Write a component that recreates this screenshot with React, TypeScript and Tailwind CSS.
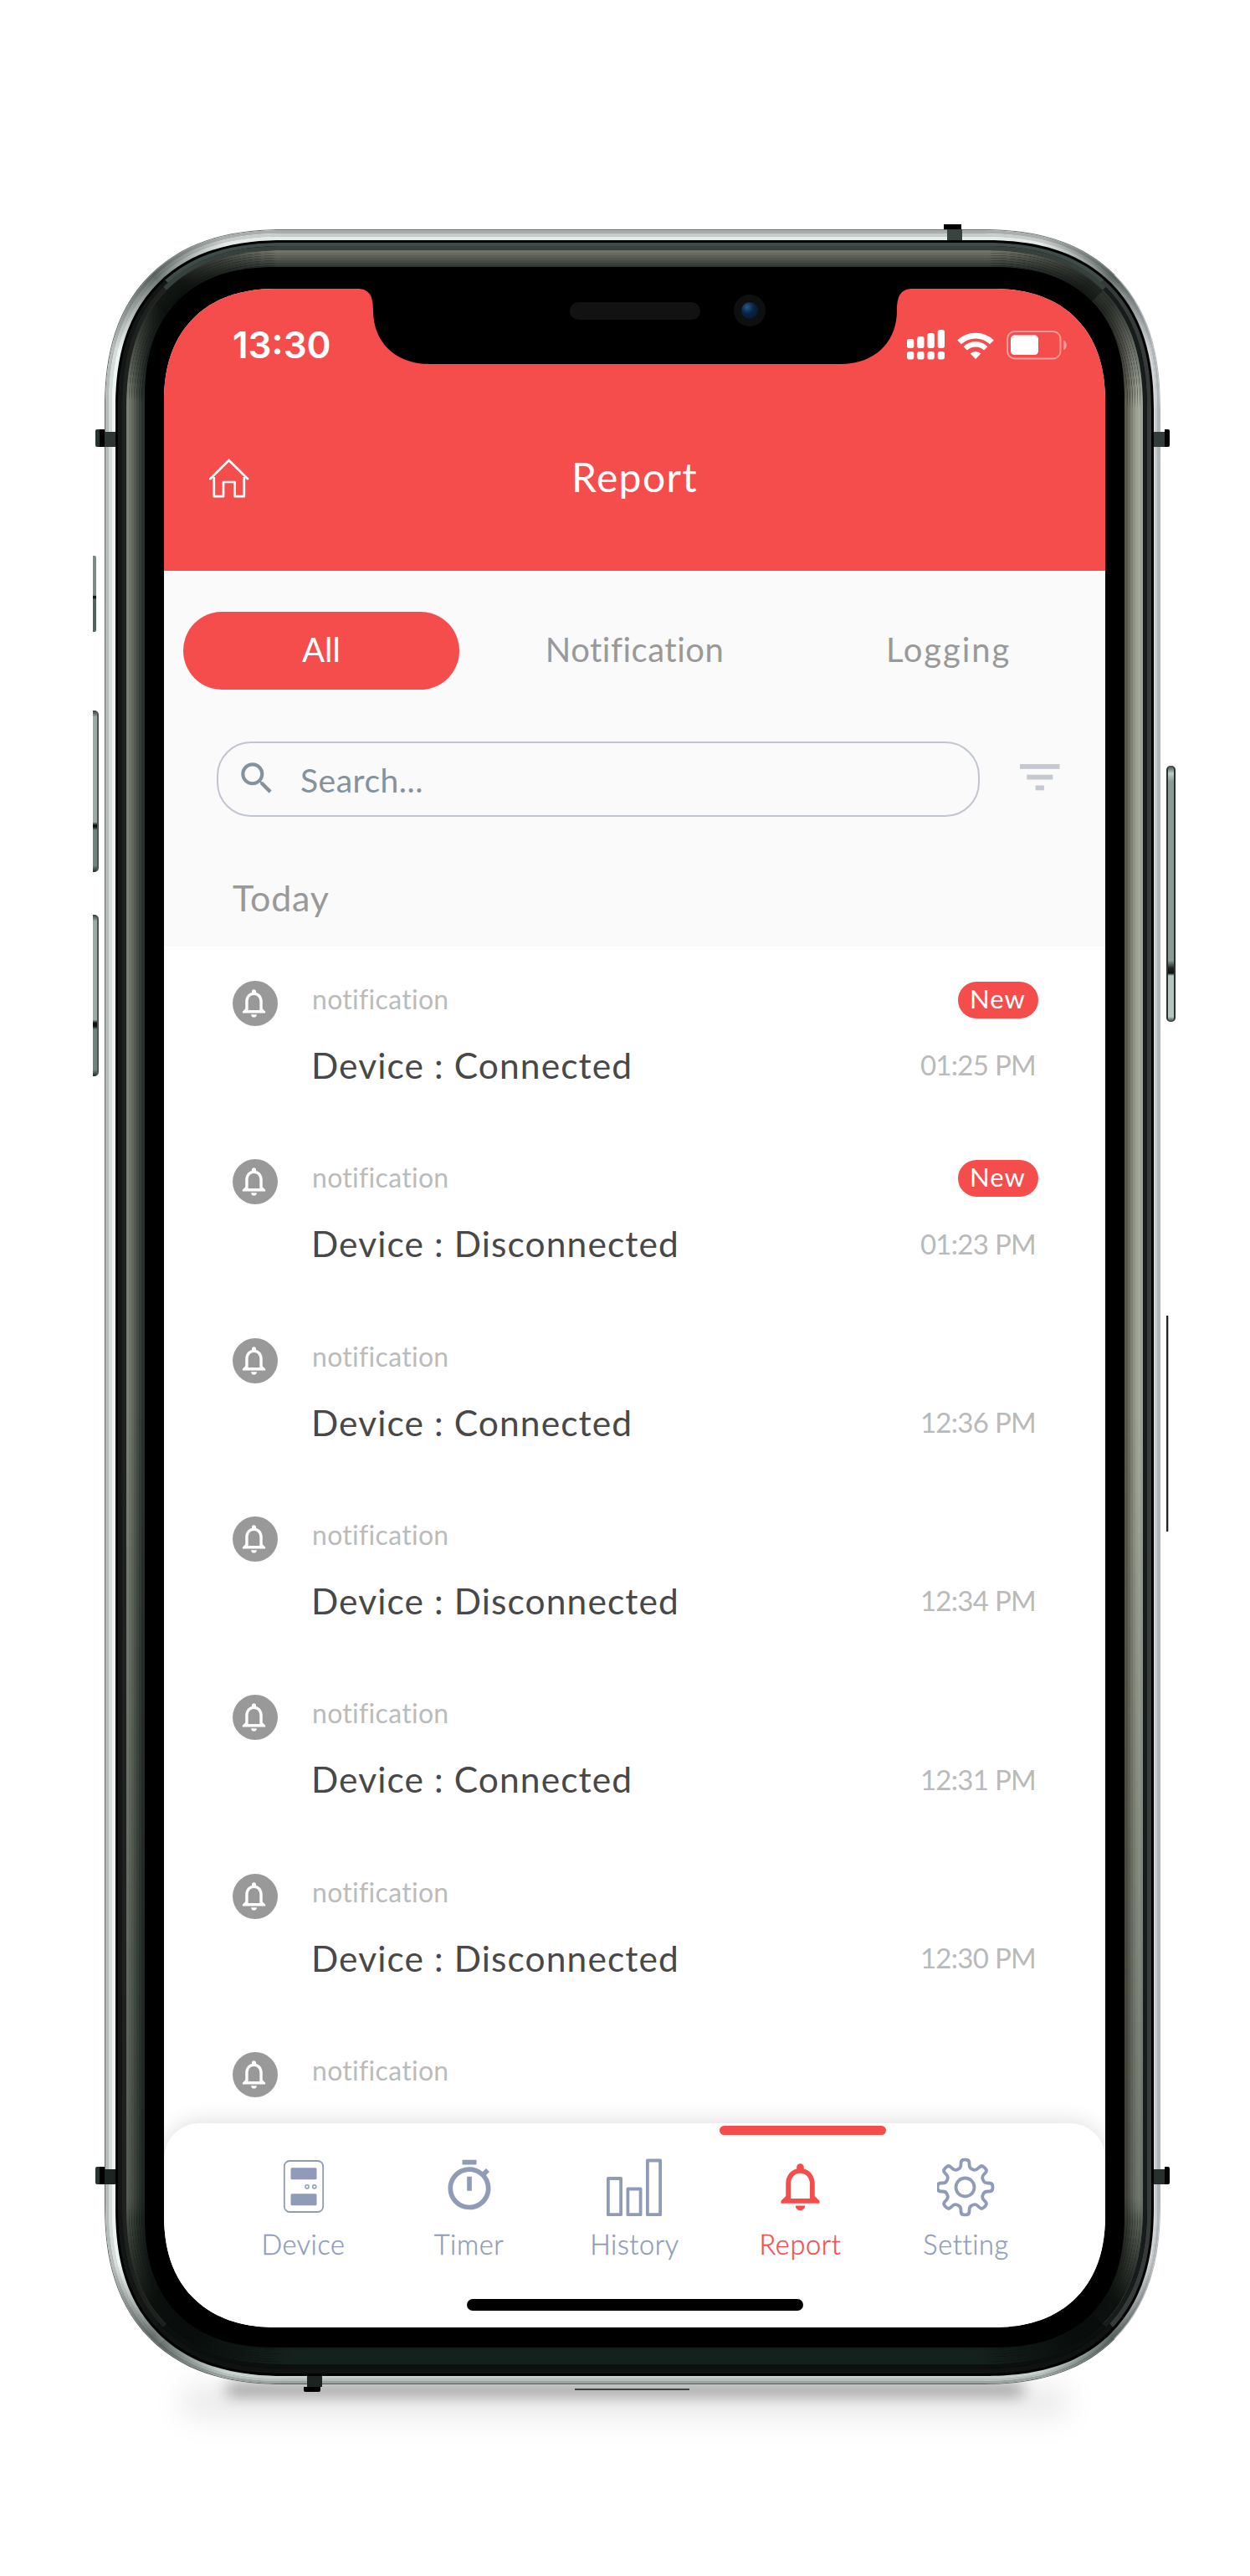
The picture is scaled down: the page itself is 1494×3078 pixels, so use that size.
import type { ReactNode } from "react";
import { MdNotificationsNone, MdOutlineTimer, MdSearch } from "react-icons/md";

// Rings of the metal case, from the outside inwards; every ring is one border.
// `shade` is laid over the rings inside it, up to the next ring with a z-index.
const rings: { ring: string; shade?: string }[] = [
  {
    ring: "relative rounded-[215px] border-[1px] border-l-[#5f6867] border-t-[#6e7574] border-r-[#b4b7b8] border-b-[#555b59]",
    shade:
      "rounded-[214px] bg-[radial-gradient(circle_95px_at_58px_58px,rgba(30,40,37,0.6),transparent),radial-gradient(circle_95px_at_calc(100%_-_58px)_58px,rgba(30,40,37,0.6),transparent),radial-gradient(circle_95px_at_58px_calc(100%_-_58px),rgba(30,40,37,0.6),transparent),radial-gradient(circle_95px_at_calc(100%_-_58px)_calc(100%_-_58px),rgba(30,40,37,0.6),transparent)]",
  },
  { ring: "rounded-[214px] border-l-[4px] border-t-[4px] border-r-[3px] border-b-[3px] border-l-[#b6bcbb] border-t-[#a8aeac] border-r-[#b0b5b8] border-b-[#9aa39f]" },
  { ring: "rounded-[210px] border-l-[4px] border-t-[4px] border-r-[2px] border-b-[3px] border-l-[#d6dcda] border-t-[#c8cdcb] border-r-[#c4c8ca] border-b-[#b5c0bb]" },
  { ring: "rounded-[206px] border-l-[4px] border-t-[4px] border-r-[2px] border-b-[3px] border-l-[#ecf5f2] border-t-[#e2ebe8] border-r-[#d2d4d6] border-b-[#c5d0cb]" },
  { ring: "relative z-10 rounded-[202px] border-[3px] border-black bg-black" },
  { ring: "rounded-[199px] border-l-[5px] border-t-[4px] border-r-[5px] border-b-[6px] border-l-[#121715] border-t-[#3e4b49] border-r-[#363a39] border-b-[#0e1211]" },
  {
    ring: "relative rounded-[194px] border-[5px] border-l-[#1f211f] border-t-[#36403d] border-r-[#151c1b] border-b-[#0b0f0e]",
    shade:
      "rounded-[189px] bg-[radial-gradient(circle_130px_at_56px_56px,rgba(8,12,10,0.9)_15%,transparent),radial-gradient(circle_130px_at_calc(100%_-_56px)_56px,rgba(8,12,10,0.75)_15%,transparent),radial-gradient(circle_150px_at_56px_calc(100%_-_56px),rgba(8,12,10,0.95)_20%,transparent),radial-gradient(circle_150px_at_calc(100%_-_56px)_calc(100%_-_56px),rgba(8,12,10,0.95)_20%,transparent),linear-gradient(transparent_55%,rgba(8,18,14,0.4))]",
  },
  { ring: "rounded-[189px] border-[3px] border-l-[#7a8074] border-t-[#6f7368] border-r-[#9ba295] border-b-[#1c2a25]" },
  { ring: "rounded-[186px] border-[3px] border-l-[#6e7468] border-t-[#666a60] border-r-[#a3a99b] border-b-[#1d2b26]" },
  { ring: "rounded-[183px] border-[3px] border-l-[#60675c] border-t-[#5c6157] border-r-[#9ca193] border-b-[#1e2b27]" },
  { ring: "rounded-[180px] border-[3px] border-l-[#515950] border-t-[#51564e] border-r-[#8f9284] border-b-[#1e2b27]" },
  { ring: "rounded-[177px] border-[3px] border-l-[#424a44] border-t-[#454b44] border-r-[#7f8074] border-b-[#1e2b27]" },
  { ring: "rounded-[174px] border-[3px] border-l-[#353d38] border-t-[#3a403a] border-r-[#6c6b60] border-b-[#1d2b26]" },
  { ring: "rounded-[171px] border-l-[4px] border-t-[2px] border-r-[4px] border-b-[2px] border-l-[#28302d] border-t-[#2f3631] border-r-[#5a594f] border-b-[#1a2622]" },
  { ring: "relative z-10 rounded-[158px] border-l-[23px] border-t-[26px] border-r-[23px] border-b-[24px] border-black bg-black" },
];

function Case({ children }: { children: ReactNode }) {
  return rings.reduceRight<ReactNode>(
    (inner, { ring, shade }) => (
      <div className={`h-full w-full [corner-shape:superellipse(1.25)] ${ring}`}>
        {shade && <div className={`absolute inset-0 [corner-shape:superellipse(1.25)] ${shade}`} />}
        {inner}
      </div>
    ),
    children,
  );
}

function HomeIcon() {
  return (
    <svg width="48" height="48" viewBox="0 0 48 48" fill="none" stroke="#fff" strokeWidth="2.7">
      <path d="M1.3 25.2V24L23.6 2 46 24v1.2" />
      <path d="M5.8 22v23.2h11.2V28h13.6v17.2h11.2V22" strokeLinejoin="round" />
    </svg>
  );
}

function Signal() {
  const bars = [11, 14, 18, 22];
  return (
    <svg width="45" height="36" viewBox="0 0 45 36" fill="#fff">
      {bars.map((h, i) => (
        <g key={h}>
          <rect x={i * 12.25} y={22 - h} width="8.3" height={h} rx="2.8" />
          <rect x={i * 12.25} y="26" width="8.3" height="9.5" rx="2.8" />
        </g>
      ))}
    </svg>
  );
}

function Wifi() {
  return (
    <svg width="44" height="33" viewBox="0 0 44 33" fill="none" stroke="#fff">
      <path d="M2.55 12.9a28 28 0 0 1 38.9 0" strokeWidth="6.8" />
      <path d="M9.8 20.4a17.5 17.5 0 0 1 24.4 0" strokeWidth="6.2" />
      <path d="M22 33l-6.3-6.5a9 9 0 0 1 12.6 0z" fill="#fff" stroke="none" />
    </svg>
  );
}

function Battery() {
  return (
    <svg width="72" height="35" viewBox="0 0 72 35">
      <rect x="1" y="1" width="63.5" height="32.5" rx="9" fill="none" stroke="#fff" strokeOpacity=".45" strokeWidth="2" />
      <rect x="5" y="5.5" width="33" height="23.5" rx="4.5" fill="#fff" />
      <path d="M68 11.5c5 1.8 5 10 0 11.8z" fill="#fff" fillOpacity=".45" />
    </svg>
  );
}

function FilterIcon() {
  return (
    <svg width="48" height="32" viewBox="0 0 48 32" fill="#c4c8d1">
      <rect y="0" width="47.5" height="5.8" />
      <rect x="8.3" y="12.7" width="31" height="5.8" />
      <rect x="18.6" y="25.5" width="10.3" height="5.8" />
    </svg>
  );
}

function DeviceIcon() {
  return (
    <svg width="50" height="70" viewBox="0 0 50 70" fill="none" stroke="#8f9bb7">
      <rect x="1.8" y="4" width="46.4" height="61" rx="6.5" strokeWidth="1.8" />
      <g fill="#8f9bb7" stroke="none">
        <rect x="9.5" y="12.3" width="31" height="14" rx="1.5" />
        <rect x="9.5" y="43.3" width="31" height="14" rx="1.5" />
      </g>
      <circle cx="29" cy="34.8" r="2.1" strokeWidth="1.5" />
      <circle cx="37.7" cy="34.8" r="2.1" strokeWidth="1.5" />
    </svg>
  );
}

function HistoryIcon() {
  return (
    <svg width="68" height="70" viewBox="1 0 68 70" fill="none" stroke="#8f9bb7" strokeWidth="3.8" strokeLinejoin="round">
      <rect x="2.9" y="25" width="15.2" height="43.2" />
      <rect x="26.4" y="37.5" width="15.2" height="30.7" />
      <rect x="49.9" y="3.5" width="15.2" height="64.7" />
    </svg>
  );
}

// Outline of a gear with eight teeth, its corners rounded.
function gearPath() {
  const pts: [number, number][] = [];
  const at = (deg: number, r: number) => {
    const a = ((deg - 90) * Math.PI) / 180;
    pts.push([35 + r * Math.cos(a), 35.5 + r * Math.sin(a)]);
  };
  for (let i = 0; i < 8; i++) {
    at(i * 45 - 12.5, 23.5);
    at(i * 45 - 8.5, 33.3);
    at(i * 45 + 8.5, 33.3);
    at(i * 45 + 12.5, 23.5);
  }
  const n = pts.length;
  const mix = (a: [number, number], b: [number, number], t: number) =>
    `${(a[0] + (b[0] - a[0]) * t).toFixed(2)} ${(a[1] + (b[1] - a[1]) * t).toFixed(2)}`;
  return (
    pts
      .map((p, i) => {
        const prev = pts[(i + n - 1) % n];
        const next = pts[(i + 1) % n];
        return `${i ? "L" : "M"}${mix(p, prev, 0.4)}Q${p[0].toFixed(2)} ${p[1].toFixed(2)} ${mix(p, next, 0.4)}`;
      })
      .join("") + "Z"
  );
}

function GearIcon() {
  return (
    <svg width="70" height="71" viewBox="1.5 0 70 71" fill="none" stroke="#8f9bb7" strokeWidth="3.8" strokeLinejoin="round">
      <path d={gearPath()} />
      <circle cx="35" cy="35.5" r="11" />
    </svg>
  );
}

const rows = [
  { text: "Device : Connected", time: "01:25 PM", isNew: true },
  { text: "Device : Disconnected", time: "01:23 PM", isNew: true },
  { text: "Device : Connected", time: "12:36 PM" },
  { text: "Device : Disconnected", time: "12:34 PM" },
  { text: "Device : Connected", time: "12:31 PM" },
  { text: "Device : Disconnected", time: "12:30 PM" },
  { text: "Device : Connected", time: "" },
];

const tabs = [
  { label: "Device", icon: <DeviceIcon /> },
  { label: "Timer", icon: <MdOutlineTimer size={68} /> },
  { label: "History", icon: <HistoryIcon /> },
  { label: "Report", icon: <MdNotificationsNone size={69} />, active: true },
  { label: "Setting", icon: <GearIcon /> },
];

function Row({ text, time, isNew }: { text: string; time: string; isNew?: boolean }) {
  return (
    <div className="flex h-[213.33px] shrink-0 pt-[41px] pr-[80px] pl-[82px]">
      <div className="flex size-[54px] items-center justify-center rounded-full bg-[#999] pr-[3px] pb-px text-white">
        <MdNotificationsNone size={41} />
      </div>
      <div className="ml-10 flex-1">
        <div className="flex h-[45px] justify-between">
          <span className="ml-px text-[32px] leading-[43px] tracking-[0.3px] text-[#bbb]">notification</span>
          {isNew && (
            <span className="mt-px flex h-11 w-24 items-center justify-center rounded-full bg-[#f54c4c] pr-px pb-1 text-[31px] tracking-[1px] text-white">
              New
            </span>
          )}
        </div>
        <div className="mt-[31px] flex h-[50px] items-center justify-between">
          <span className="text-[42.5px] leading-[50px] tracking-[1.1px] text-[#484848]">{text}</span>
          <span className="mr-[3px] text-[33px] tracking-[-0.7px] text-[#b8babb]">{time}</span>
        </div>
      </div>
    </div>
  );
}

function Screen() {
  return (
    <div className="relative flex h-full w-full flex-col overflow-hidden rounded-[135px] bg-white [corner-shape:superellipse(1.2)]">
      <header className="h-[337px] bg-[#f54c4c] text-white">
        <div className="flex h-[134px] items-center justify-between pr-[46px] pl-[82px]">
          <span className="font-[Inter] text-[44px] font-semibold">13:30</span>
          <div className="flex items-center">
            <Signal />
            <div className="ml-[15px]"><Wifi /></div>
            <div className="ml-[15px]"><Battery /></div>
          </div>
        </div>
        <div className="grid h-[203px] grid-cols-[200px_1fr_200px] items-center pb-[21px]">
          <div className="pt-[3px] pl-[54px]"><HomeIcon /></div>
          <h1 className="text-center text-[48px] tracking-[1.4px]">Report</h1>
        </div>
      </header>

      <section className="h-[449px] bg-[#fafafa] pt-[49px]">
        <div className="grid h-[93px] grid-cols-3 text-center text-[40px] text-[#999]">
          <div className="mr-[22px] ml-[23px] flex items-center justify-center rounded-full bg-[#f54c4c] pb-1 text-white">All</div>
          <div className="flex items-center justify-center pb-1 tracking-[0.5px]">Notification</div>
          <div className="flex items-center justify-center pb-1 tracking-[1.9px]">Logging</div>
        </div>
        <div className="mt-[62px] flex h-[90px] pl-[63px]">
          <div className="flex w-[912px] items-center rounded-[41px] border-[2.5px] border-[#c1c5cf] pl-[21px] text-[#84929e]">
            <MdSearch size={50} className="mb-0.5" />
            <span className="mt-[3px] ml-[27px] text-[39px] tracking-[0.5px]">Search...</span>
          </div>
          <div className="mt-[27px] ml-[48px]"><FilterIcon /></div>
        </div>
        <h2 className="mt-[67px] pl-[82px] text-[43px] leading-[60px] tracking-[0.8px] text-[#999]">Today</h2>
      </section>

      <div className="flex h-[1446px] shrink-0 flex-col overflow-hidden">
        {rows.map((row, i) => (
          <Row key={i} {...row} />
        ))}
      </div>

      <nav className="relative -mt-10 flex h-[244px] shrink-0 justify-center rounded-t-[42px] bg-white pt-[41px] shadow-[0_-3px_24px_rgba(0,0,0,0.12)]">
        {tabs.map((tab) => (
          <div
            key={tab.label}
            className={`relative flex w-[198px] flex-col items-center ${tab.active ? "text-[#f54c4c]" : "text-[#8f9bb7]"}`}
          >
            {tab.active && (
              <div className="absolute -top-[38px] left-[2px] h-[11px] w-[199px] rounded-full bg-[#f54c4c]" />
            )}
            <div className="flex h-[70px] items-start">{tab.icon}</div>
            <span className="mt-[14px] text-[32.5px] leading-10 font-light tracking-[0.6px] [-webkit-text-stroke:0.4px_currentColor]">
              {tab.label}
            </span>
          </div>
        ))}
        <div className="absolute bottom-5 left-1/2 h-[14px] w-[402px] -translate-x-1/2 rounded-full bg-black" />
      </nav>

      <div className="absolute -top-px left-[231px]">
        <svg width="664" height="91" viewBox="0 -1 664 91">
          <path d="M0-1V0C14 0 19 8 19 26 19 65 47 90 86 90H578C617 90 645 65 645 26 645 8 650 0 664 0V-1z" fill="#000" />
        </svg>
        <div className="absolute top-[17px] left-[254px] h-[21px] w-[156px] rounded-full bg-[#121212]" />
        <div className="absolute top-[8px] left-[450px] flex size-[38px] items-center justify-center rounded-full bg-[#0e0f0f]">
          <div className="size-5 rounded-full bg-[radial-gradient(circle_at_35%_30%,#24598d_0%,#0b2443_40%,#061222_100%)]" />
        </div>
      </div>
    </div>
  );
}

function Buttons() {
  return (
    <>
      <div className="absolute top-[664px] left-[111px] h-[91px] w-1 rounded-r-xs bg-[linear-gradient(#7d8a85_0_52%,#10181a_53%_56%,#4f6660_57%)]" />
      <div className="absolute top-[849px] left-[111px] h-[193px] w-[7px] rounded-r-[5px] border-r-2 border-[#4c5653] bg-[linear-gradient(#333b39_0%,#9aaaa4_4%_69%,#0c1211_71%_72%,#6c857d_74%_96%,#1e2826_100%)]" />
      <div className="absolute top-[1093px] left-[111px] h-[193px] w-[7px] rounded-r-[5px] border-r-2 border-[#4c5653] bg-[linear-gradient(#333b39_0%,#9aaaa4_4%_65%,#0c1211_67%_69%,#6c857d_71%_96%,#1e2826_100%)]" />
      <div className="absolute top-[915px] left-[1394px] h-[306px] w-[11px] rounded-[5px] border-x-2 border-[#28312f] bg-[linear-gradient(#3a4643_0%,#c0cdc8_3%,#8b9c96_6%_76%,#222_79%,#0c1211_81%,#b5c6c0_82%_98%,#2c3835_100%)]" />
      <div className="absolute top-[1572px] left-[1394px] h-[258px] w-[3px] border-r border-[#bbb] bg-[#222]" />
      <div className="absolute top-[2854px] left-[687px] h-[2px] w-[137px] bg-[#3c4543]" />
    </>
  );
}

// Antenna bands that cross the rim of the case.
function Bands() {
  return (
    <>
      <div className="absolute top-[268px] left-[1128px] h-[6px] w-[21px] bg-black" />
      <div className="absolute top-[274px] left-[1132px] h-[13px] w-[18px] bg-[#38423f]" />
      <div className="absolute top-[513px] left-[114px] h-[21px] w-[11px] rounded-l-xs border-l-[5px] border-[#26352f] bg-black" />
      <div className="absolute top-[516px] left-[125px] h-[18px] w-[13px] bg-[#2d3633]" />
      <div className="absolute top-[516px] left-[1378px] h-[18px] w-[14px] bg-[#333c3a]" />
      <div className="absolute top-[513px] left-[1392px] h-[21px] w-[6px] rounded-r-xs bg-black" />
      <div className="absolute top-[2589px] left-[114px] h-[21px] w-[11px] rounded-l-xs border-l-[5px] border-[#26352f] bg-black" />
      <div className="absolute top-[2592px] left-[125px] h-[18px] w-[13px] bg-[#1c2522]" />
      <div className="absolute top-[2592px] left-[1378px] h-[18px] w-[14px] bg-[#27302d]" />
      <div className="absolute top-[2589px] left-[1392px] h-[21px] w-[6px] rounded-r-xs bg-black" />
      <div className="absolute top-[2837px] left-[367px] h-[15px] w-[18px] bg-[#1c2422]" />
      <div className="absolute top-[2852px] left-[363px] h-[6px] w-5 rounded-b-xs bg-black" />
    </>
  );
}

export default function App() {
  return (
    <main className="relative h-[3078px] w-[1494px] overflow-hidden bg-white pt-[274px] pl-[125px] font-[Lato,sans-serif]">
      <div className="absolute top-[2848px] left-[270px] h-[14px] w-[954px] rounded-full bg-black/40 blur-[9px]" />
      <div className="absolute top-[2850px] left-[215px] h-10 w-[1064px] rounded-full bg-black/8 blur-[16px]" />
      <Buttons />
      <div className="relative h-[2575px] w-[1262px]">
        <Case>
          <Screen />
        </Case>
      </div>
      <Bands />
    </main>
  );
}
